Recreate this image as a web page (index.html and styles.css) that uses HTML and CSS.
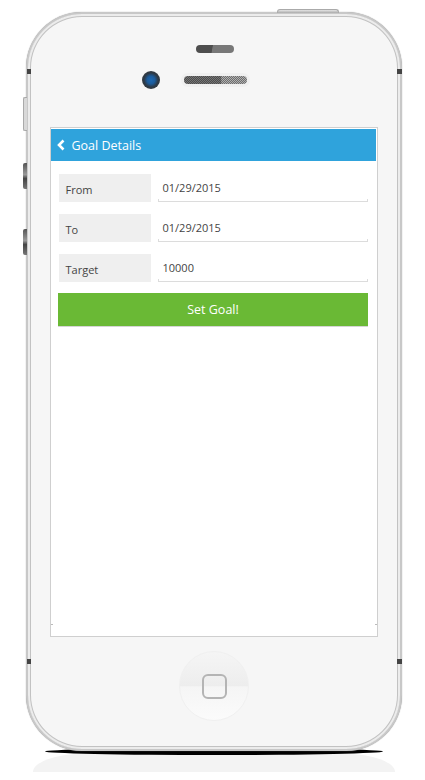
FILE: index.html
```html
<!DOCTYPE html>
<html lang="en">
<head>
  <meta charset="UTF-8" />
  <meta name="viewport" content="width=device-width, initial-scale=1.0" />
  <title>Goal Details</title>
  <link rel="stylesheet" href="styles.css">
</head>
<body>

  <div class="phone">
    <span class="side-btn power"></span>
    <span class="side-btn mute"></span>
    <span class="side-btn vol-up"></span>
    <span class="side-btn vol-down"></span>
    <span class="notch left top"></span>
    <span class="notch right top"></span>
    <span class="notch left bottom"></span>
    <span class="notch right bottom"></span>

    <div class="earpiece"></div>
    <div class="sensors">
      <div class="camera"></div>
      <div class="speaker"><div class="grille"></div></div>
    </div>

    <div class="screen">
      <header class="topbar">
        <svg class="back" width="10" height="12" viewBox="0 0 10 12">
          <path d="M7.5 1.5 L3 6 L7.5 10.5" fill="none" stroke="#fff" stroke-width="2.6" />
        </svg>
        <h1>Goal Details</h1>
      </header>
      <div class="form">
        <div class="row">
          <label class="field-label">From</label>
          <div class="field-value">01/29/2015</div>
        </div>
        <div class="row">
          <label class="field-label">To</label>
          <div class="field-value">01/29/2015</div>
        </div>
        <div class="row">
          <label class="field-label">Target</label>
          <div class="field-value">10000</div>
        </div>
        <button class="set-goal">Set Goal!</button>
      </div>
      <span class="speck speck-left"></span>
      <span class="speck speck-right"></span>
    </div>

    <div class="home"><div class="home-square"></div></div>
  </div>

  <div class="shadow"></div>
  <div class="reflection"></div>

</body>
</html>
```

FILE: styles.css
```css
body {
  font-family: "Open Sans", sans-serif;
  background: #fff;
  margin: 0;
  width: 425px;
  height: 780px;
  overflow: hidden;
}

.phone {
  position: relative;
  z-index: 2;
  box-sizing: border-box;
  width: 376px;
  height: 739px;
  margin: 12px 0 0 26px;
  padding-top: 31px;
  background: #f6f6f6;
  border: 2px solid #c8c8c8;
  border-radius: 56px;
  box-shadow: inset 0 0 0 2px #ececec, inset 0 0 0 3px #c2c2c2, 0 0 1px #888;
  display: flex;
  flex-direction: column;
  align-items: center;
}

.side-btn {
  position: absolute;
  background: #888;
  border-radius: 2px 0 0 2px;
}

.power {
  top: -5px;
  right: 61px;
  width: 62px;
  height: 4px;
  background: linear-gradient(#e4e4e4, #aaa);
  border: 1px solid #aaa;
  border-bottom: 0;
  border-radius: 3px 3px 0 0;
  box-sizing: border-box;
}

.mute {
  top: 83px;
  left: -5px;
  width: 4px;
  height: 34px;
  background: #d9d9d9;
  border: 1px solid #aaa;
  border-right: 0;
  box-sizing: border-box;
}

.vol-up, .vol-down {
  left: -5px;
  width: 4px;
  height: 26px;
  background: linear-gradient(#555, #999 45%, #444 60%, #777);
}

.vol-up { top: 149px; }
.vol-down { top: 215px; }

.notch {
  position: absolute;
  width: 4px;
  height: 5px;
  background: #444;
}

.notch.left { left: -1px; }
.notch.right { right: -2px; width: 5px; }
.notch.top { top: 55px; }
.notch.bottom { top: 645px; }

.earpiece {
  width: 38px;
  height: 8px;
  margin-left: 2px;
  border-radius: 4px;
  background: linear-gradient(100deg, #4e4e4e 42%, #787878 44%);
}

.sensors {
  display: flex;
  align-items: center;
  gap: 21px;
  height: 20px;
  margin: 17px 0 0 -37px;
}

.camera {
  width: 18px;
  height: 18px;
  border-radius: 50%;
  background: radial-gradient(circle, #1f68b0 0, #1c5c9c 30%, #2e3a46 55%, #3a3a3a 100%);
}

.speaker {
  box-sizing: border-box;
  width: 69px;
  height: 14px;
  padding: 3px;
  border-radius: 7px;
  background: #f0f0f0;
}

.grille {
  height: 8px;
  border-radius: 4px;
  background:
    linear-gradient(90deg, rgba(60, 60, 60, .45) 58%, rgba(255, 255, 255, .12) 60%),
    repeating-conic-gradient(#5a5a5a 0 25%, #a4a4a4 0 50%) 0 0 / 2px 2px;
}

.screen {
  position: relative;
  box-sizing: border-box;
  width: 328px;
  height: 510px;
  margin-top: 37px;
  margin-left: -1px;
  padding: 1px 1px 0 0;
  background: #fff;
  border: 1px solid #cfcfcf;
}

.speck {
  position: absolute;
  top: 496px;
  width: 2px;
  height: 1px;
  background: #bbb;
}

.speck-left { left: 0; }
.speck-right { right: 0; }

.topbar {
  display: flex;
  align-items: center;
  height: 32px;
  padding-left: 5px;
  background: #2fa3dc;
  color: #fff;
}

.back {
  margin-right: 6px;
}

.topbar h1 {
  margin: 0;
  font-size: 12.5px;
  font-weight: 400;
}

.form {
  padding: 13px 8px 0 7px;
  display: flex;
  flex-direction: column;
}

.row {
  display: flex;
  gap: 7px;
  height: 28px;
  margin-bottom: 12px;
}

.field-label {
  box-sizing: border-box;
  width: 92px;
  margin-left: 1px;
  padding: 8px 0 0 7px;
  background: #efefef;
  color: #444;
  font-size: 11px;
  line-height: 15px;
}

.field-value {
  position: relative;
  box-sizing: border-box;
  flex: 1;
  padding: 6px 0 0 5px;
  border-bottom: 1px solid #dcdcdc;
  color: #444;
  font-size: 11px;
  line-height: 15px;
}

.field-value::before,
.field-value::after {
  content: "";
  position: absolute;
  bottom: 0;
  width: 1px;
  height: 2px;
  background: #dcdcdc;
}

.field-value::before { left: 0; }
.field-value::after { right: 0; }

.set-goal {
  height: 34px;
  margin-top: -1px;
  padding: 0 0 0 1px;
  border: 0;
  border-bottom: 1px solid #d5d5d5;
  background: #6ab935;
  color: #fff;
  font-family: inherit;
  font-size: 12.5px;
}

.home {
  box-sizing: border-box;
  width: 70px;
  height: 70px;
  margin-top: 14px;
  border-radius: 50%;
  border: 1px solid #f0f0f0;
  background: linear-gradient(#f5f5f5, #ededed 50%, #f5f5f5 51%, #fbfbfb);
  display: flex;
  align-items: center;
  justify-content: center;
}

.home-square {
  box-sizing: border-box;
  width: 25px;
  height: 25px;
  border: 2px solid #b4b4b4;
  border-radius: 6px;
}

.shadow {
  position: absolute;
  z-index: 1;
  left: 45px;
  top: 748px;
  width: 338px;
  height: 7px;
  background: #000;
  border-radius: 50%;
}

.reflection {
  position: absolute;
  left: 33px;
  top: 754px;
  width: 362px;
  height: 18px;
  background: #f3f3f3;
  border-radius: 50px 50px 0 0 / 18px 18px 0 0;
}
```
